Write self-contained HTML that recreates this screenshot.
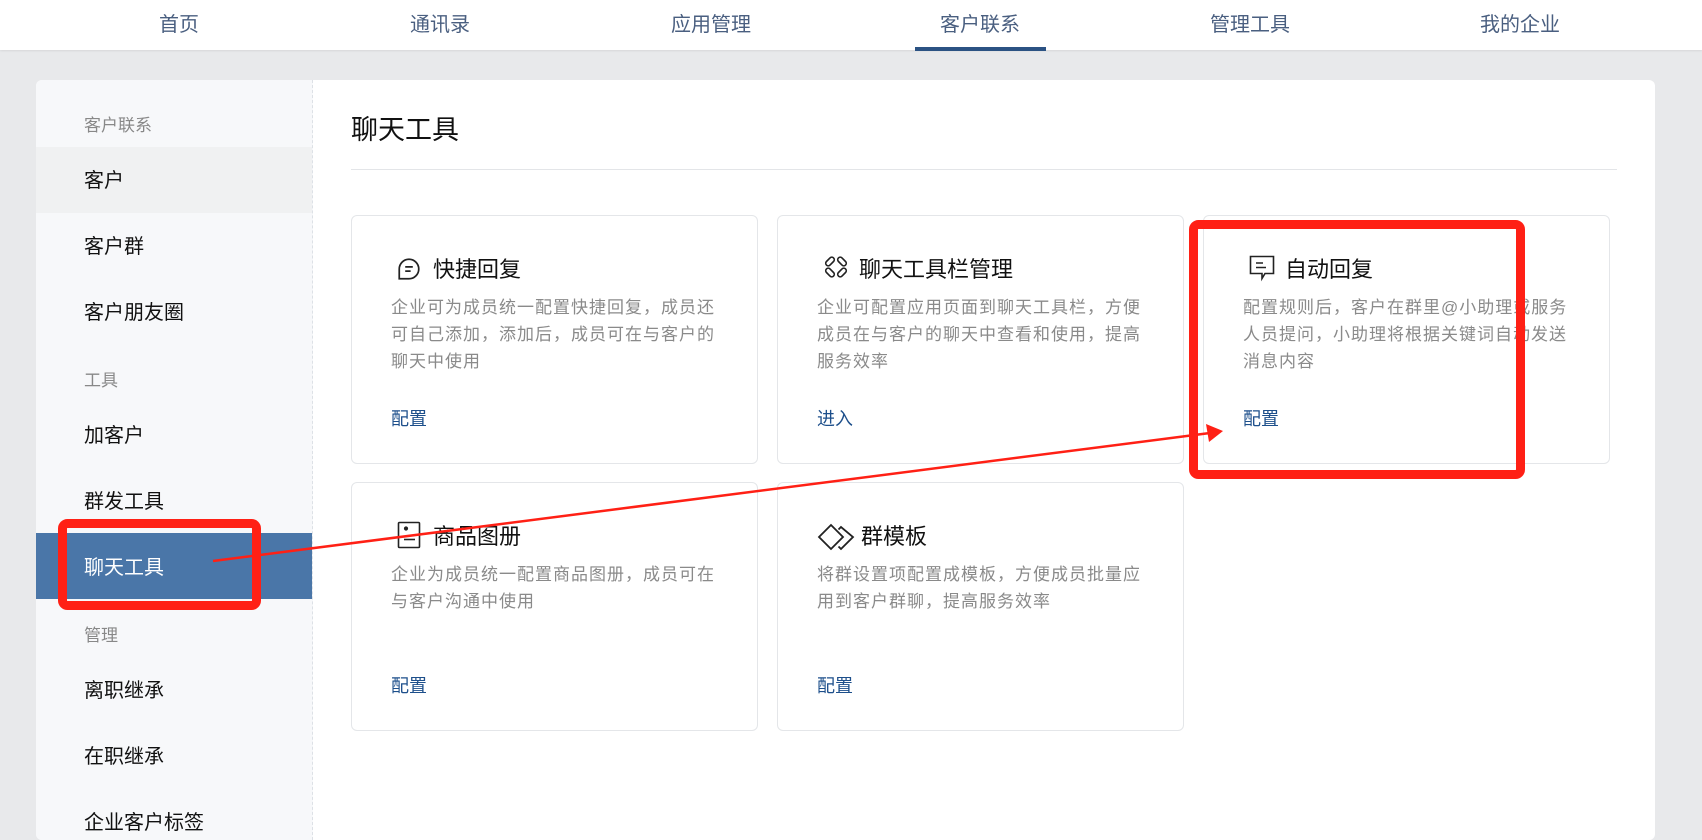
<!DOCTYPE html>
<html><head><meta charset="utf-8"><style>
*{margin:0;padding:0;box-sizing:border-box}
body{width:1702px;height:828px;overflow:hidden;background:#e8e9eb;font-family:"Liberation Sans","Noto Sans CJK SC",sans-serif;position:relative}
.nav{position:absolute;left:0;top:0;width:1702px;height:50px;background:#fff;box-shadow:0 1px 2px rgba(0,0,0,.08)}
.nav span{position:absolute;top:8px;font-size:20px;color:#4a5f80;transform:translateX(-50%)}
.ul{position:absolute;left:915px;top:47px;width:131px;height:4px;background:#2b5283}
.main{position:absolute;left:36px;top:80px;width:1619px;height:760px;background:#fff;border-radius:6px;overflow:hidden}
.side{position:absolute;left:0;top:0;width:277px;height:760px;background:#f7f8fa;border-right:1px dashed #dde1e6}
.side .tx{position:absolute;left:48px;font-size:20px;color:#111}
.side .lab{font-size:17px;color:#888}
.side .row{position:absolute;left:0;width:276px;height:66px}
.card{position:absolute;width:407px;height:249px;border:1px solid #e4e6e9;border-radius:6px;background:#fff}
.card .t{position:absolute;left:81px;top:36px;font-size:22px;color:#111}
.card .d{position:absolute;left:39px;top:78px;width:340px;font-size:17px;letter-spacing:1px;line-height:27px;color:#8a8a8a}
.card .l{position:absolute;left:39px;top:189px;font-size:18px;color:#1d4f8b}
.card svg{position:absolute}
</style></head><body>
<div class="nav">
<span style="left:179px">首页</span><span style="left:440px">通讯录</span><span style="left:711px">应用管理</span><span style="left:980px">客户联系</span><span style="left:1250px">管理工具</span><span style="left:1520px">我的企业</span>
<div class="ul"></div></div>
<div class="main">
<div class="side">
<div class="row" style="top:67px;background:#f0f1f2"></div>
<div class="row" style="top:453px;background:#4a76a8"></div>
<div class="tx lab" style="top:31px">客户联系</div>
<div class="tx" style="top:84px">客户</div>
<div class="tx" style="top:150px">客户群</div>
<div class="tx" style="top:216px">客户朋友圈</div>
<div class="tx lab" style="top:286px">工具</div>
<div class="tx" style="top:339px">加客户</div>
<div class="tx" style="top:405px">群发工具</div>
<div class="tx" style="top:471px;color:#fff">聊天工具</div>
<div class="tx lab" style="top:541px">管理</div>
<div class="tx" style="top:594px">离职继承</div>
<div class="tx" style="top:660px">在职继承</div>
<div class="tx" style="top:726px">企业客户标签</div>
</div>
<div style="position:absolute;left:315px;top:28px;font-size:27px;color:#111">聊天工具</div>
<div style="position:absolute;left:315px;top:89px;width:1266px;height:1px;background:#e3e5e8"></div>
</div>

<div class="card" style="left:351px;top:215px">
<svg style="left:44px;top:40px" width="26" height="26" viewBox="0 0 24 24" fill="none" stroke="#222" stroke-width="1.6"><path d="M3 21V12A9 9 0 1 1 12 21Z"/><path d="M8.5 10h7M8.5 14h5"/></svg>
<div class="t">快捷回复</div>
<div class="d">企业可为成员统一配置快捷回复，成员还可自己添加，添加后，成员可在与客户的聊天中使用</div>
<div class="l">配置</div></div>

<div class="card" style="left:777px;top:215px">
<svg style="left:45px;top:38px" width="26" height="26" viewBox="0 0 26 26" fill="none" stroke="#222" stroke-width="1.6"><rect x="2" y="5" width="10" height="5" rx="2.5" transform="rotate(-45 7 7.5)"/><rect x="14" y="5" width="10" height="5" rx="2.5" transform="rotate(45 19 7.5)"/><rect x="2" y="16" width="10" height="5" rx="2.5" transform="rotate(45 7 18.5)"/><rect x="14" y="16" width="10" height="5" rx="2.5" transform="rotate(-45 19 18.5)"/></svg>
<div class="t" style="left:81px">聊天工具栏管理</div>
<div class="d">企业可配置应用页面到聊天工具栏，方便成员在与客户的聊天中查看和使用，提高服务效率</div>
<div class="l">进入</div></div>

<div class="card" style="left:1203px;top:215px">
<svg style="left:45px;top:39px" width="26" height="28" viewBox="0 0 26 28" fill="none" stroke="#222" stroke-width="1.6"><path d="M1.5 1.5h23v17H16l-3 5v-5H1.5Z"/><path d="M7 8h7M7 12.5h10"/></svg>
<div class="t" style="left:81px">自动回复</div>
<div class="d">配置规则后，客户在群里@小助理或服务人员提问，小助理将根据关键词自动发送消息内容</div>
<div class="l">配置</div></div>

<div class="card" style="left:351px;top:482px">
<svg style="left:45px;top:38px" width="24" height="28" viewBox="0 0 24 28" fill="none" stroke="#222" stroke-width="1.6"><rect x="1.5" y="1.5" width="21" height="25" rx="1"/><path d="M7 18.5h11"/><circle cx="9" cy="7.5" r="1.3" fill="#222"/></svg>
<div class="t">商品图册</div>
<div class="d">企业为成员统一配置商品图册，成员可在与客户沟通中使用</div>
<div class="l">配置</div></div>

<div class="card" style="left:777px;top:482px">
<svg style="left:39px;top:40px" width="38" height="28" viewBox="0 0 38 28" fill="none" stroke="#222" stroke-width="1.8"><path d="M14 2l12 12-12 12L2 14Z"/><path d="M21.5 6.5L24 4l12 10-12 12-2.5-2.5"/></svg>
<div class="t" style="left:83px">群模板</div>
<div class="d">将群设置项配置成模板，方便成员批量应用到客户群聊，提高服务效率</div>
<div class="l">配置</div></div>

<svg style="position:absolute;left:0;top:0" width="1702" height="828">
<rect x="1193.5" y="224.5" width="327" height="250" rx="5" fill="none" stroke="#ff2015" stroke-width="9"/>
<rect x="62.5" y="523.5" width="194" height="82" rx="5" fill="none" stroke="#ff2015" stroke-width="9"/>
<line x1="213" y1="561" x2="1210" y2="433" stroke="#ff2015" stroke-width="2.5"/>
<path d="M1223 431L1206 424L1209 442Z" fill="#ff2015"/>
</svg>
</body></html>
